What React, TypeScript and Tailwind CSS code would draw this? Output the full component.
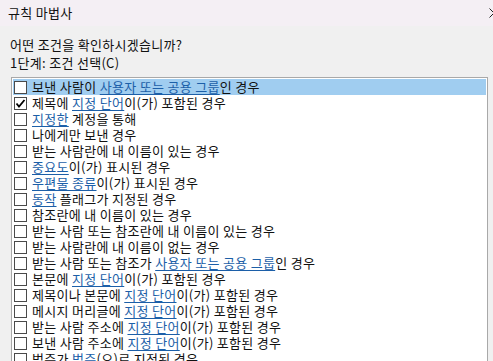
import React from 'react';

type Seg = [string, boolean?];

const rules: Seg[][] = [
  [['보낸 사람이 '], ['사용자 또는 공용 그룹', true], ['인 경우']],
  [['제목에 '], ['지정 단어', true], ['이(가) 포함된 경우']],
  [['지정한', true], [' 계정을 통해']],
  [['나에게만 보낸 경우']],
  [['받는 사람란에 내 이름이 있는 경우']],
  [['중요도', true], ['이(가) 표시된 경우']],
  [['우편물 종류', true], ['이(가) 표시된 경우']],
  [['동작', true], [' 플래그가 지정된 경우']],
  [['참조란에 내 이름이 있는 경우']],
  [['받는 사람 또는 참조란에 내 이름이 있는 경우']],
  [['받는 사람란에 내 이름이 없는 경우']],
  [['받는 사람 또는 참조가 '], ['사용자 또는 공용 그룹', true], ['인 경우']],
  [['본문에 '], ['지정 단어', true], ['이(가) 포함된 경우']],
  [['제목이나 본문에 '], ['지정 단어', true], ['이(가) 포함된 경우']],
  [['메시지 머리글에 '], ['지정 단어', true], ['이(가) 포함된 경우']],
  [['받는 사람 주소에 '], ['지정 단어', true], ['이(가) 포함된 경우']],
  [['보낸 사람 주소에 '], ['지정 단어', true], ['이(가) 포함된 경우']],
  [['범주가 '], ['범주', true], ['(으)로 지정된 경우']],
];

const Checkbox = ({ checked }: { checked: boolean }) => (
  <span className="w-[13px] h-[13px] shrink-0 border border-[#4a4a4a] bg-white flex items-center justify-center">
    {checked && (
      <svg width="11" height="11" viewBox="0 0 11 11">
        <polyline points="1.5,5.5 4,8.5 9.5,2" fill="none" stroke="#000" strokeWidth="1.8" />
      </svg>
    )}
  </span>
);

export default function App() {
  return (
    <div
      className="h-screen overflow-hidden bg-[#f0f0f0] text-[13px] tracking-[0.3px] text-[#111]"
      style={{ fontFamily: '"Noto Sans CJK KR", "Noto Sans", sans-serif' }}
    >
      {/* Title bar */}
      <div className="h-[26px] bg-[#f4eff4] flex items-center justify-between pl-[8px]">
        <span className="leading-4">규칙 마법사</span>
        <svg width="10" height="10" viewBox="0 0 10 10" className="-mr-[6px]">
          <path d="M0.5 0.5 L9.5 9.5 M9.5 0.5 L0.5 9.5" stroke="#222" strokeWidth="1" />
        </svg>
      </div>

      <div className="pt-[11px] pl-[10px]">
        <div className="leading-4">어떤 조건을 확인하시겠습니까?</div>
        <div className="leading-4 mt-[2px]">1단계: 조건 선택(C)</div>
      </div>

      {/* Condition list */}
      <div className="ml-[11px] mt-[6px] w-[477px] border border-[#a9a9a9] bg-white p-px">
        {rules.map((segs, i) => (
          <div
            key={i}
            className={`h-4 flex items-center pl-px ${i === 0 ? 'bg-[#a0cdf0]' : ''}`}
          >
            <Checkbox checked={i === 1} />
            <span className="ml-[5px] leading-4 whitespace-nowrap">
              {segs.map(([t, link], j) =>
                link ? (
                  <span
                    key={j}
                    className="text-[#1c5fa8] underline decoration-[#1c5fa8] underline-offset-2"
                  >
                    {t}
                  </span>
                ) : (
                  <span key={j}>{t}</span>
                )
              )}
            </span>
          </div>
        ))}
      </div>
    </div>
  );
}
